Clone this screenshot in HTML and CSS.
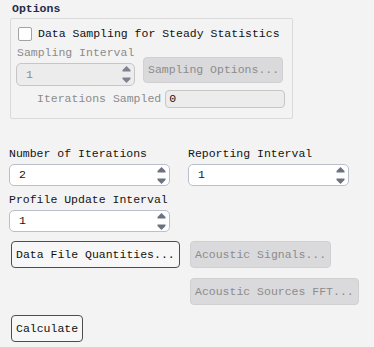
FILE: index.html
```html
<!DOCTYPE html>
<html>
<head>
<meta charset="utf-8">
<link rel="stylesheet" href="styles.css">
</head>
<body>
<div class="panel">
  <div class="title">Options</div>
  <div class="group">
    <label class="check-row">
      <span class="checkbox"></span>
      <span class="check-text">Data Sampling for Steady Statistics</span>
    </label>
    <div class="sampling-row">
      <div class="sampling-col">
        <div class="label disabled-text">Sampling Interval</div>
        <div class="spinner spinner-disabled sampling-spinner">
          <span class="spin-value">1</span>
          <svg class="spin-arrows" width="9" height="17" viewBox="0 0 9 17"><path d="M4.5 0 L8.5 4 L8.5 5.5 L0.5 5.5 L0.5 4 Z M0.5 11.5 L8.5 11.5 L8.5 13 L4.5 17 L0.5 13 Z" fill="#7d8490"/></svg>
        </div>
      </div>
      <button class="btn btn-disabled sampling-btn">Sampling Options...</button>
    </div>
    <div class="iter-row">
      <span class="iter-label disabled-text">Iterations Sampled</span>
      <div class="field field-disabled">0</div>
    </div>
  </div>

  <div class="fields-grid">
    <div class="field-cell">
      <div class="label">Number of Iterations</div>
      <div class="spinner">
        <span class="spin-value">2</span>
        <svg class="spin-arrows" width="9" height="17" viewBox="0 0 9 17"><path d="M4.5 0 L8.5 4 L8.5 5.5 L0.5 5.5 L0.5 4 Z M0.5 11.5 L8.5 11.5 L8.5 13 L4.5 17 L0.5 13 Z" fill="#6b7280"/></svg>
      </div>
    </div>
    <div class="field-cell">
      <div class="label">Reporting Interval</div>
      <div class="spinner">
        <span class="spin-value">1</span>
        <svg class="spin-arrows" width="9" height="17" viewBox="0 0 9 17"><path d="M4.5 0 L8.5 4 L8.5 5.5 L0.5 5.5 L0.5 4 Z M0.5 11.5 L8.5 11.5 L8.5 13 L4.5 17 L0.5 13 Z" fill="#6b7280"/></svg>
      </div>
    </div>
    <div class="field-cell">
      <div class="label">Profile Update Interval</div>
      <div class="spinner">
        <span class="spin-value">1</span>
        <svg class="spin-arrows" width="9" height="17" viewBox="0 0 9 17"><path d="M4.5 0 L8.5 4 L8.5 5.5 L0.5 5.5 L0.5 4 Z M0.5 11.5 L8.5 11.5 L8.5 13 L4.5 17 L0.5 13 Z" fill="#6b7280"/></svg>
      </div>
    </div>
  </div>

  <div class="buttons-grid">
    <div class="btn-cell"><button class="btn">Data File Quantities...</button></div>
    <div class="btn-cell"><button class="btn btn-disabled">Acoustic Signals...</button></div>
    <div class="btn-cell"></div>
    <div class="btn-cell"><button class="btn btn-disabled">Acoustic Sources FFT...</button></div>
    <div class="btn-cell"><button class="btn">Calculate</button></div>
  </div>
</div>
</body>
</html>
```

FILE: styles.css
```css
* { box-sizing: border-box; }

html, body {
  margin: 0;
  padding: 0;
  background: #f3f3f3;
}

body {
  font-family: "Liberation Mono", "DejaVu Sans Mono", monospace;
  font-size: 11.5px;
  line-height: 14px;
  color: #141414;
}

.btn {
  font: inherit;
  height: 27px;
  padding: 0 4px;
  background: #f7f7f7;
  color: #111;
  border: 1px solid #4d4d4d;
  border-radius: 4px;
  white-space: nowrap;
  margin: 0;
}

.btn-disabled {
  background: #dadadc;
  border-color: #d0d0d2;
  color: #8c8c8c;
}

.panel {
  width: 374px;
  height: 347px;
  overflow: hidden;
}

.title {
  font-weight: bold;
  color: #1f2c4a;
  padding: 2px 0 0 12px;
  height: 18px;
}

.group {
  margin-left: 10px;
  width: 283px;
  height: 101px;
  border: 1px solid #dadada;
  border-radius: 2px;
  padding: 8px 0 0 6px;
}

.check-row {
  display: flex;
  align-items: center;
  height: 14px;
  gap: 6px;
  margin-left: 1px;
}

.checkbox {
  width: 14px;
  height: 14px;
  background: #ffffff;
  border: 1px solid #a3a3a3;
  border-radius: 2px;
  flex: none;
}

.check-text { color: #111; }

.disabled-text { color: #8b8b8b; }

.sampling-row {
  display: flex;
  align-items: flex-end;
  margin-top: 5px;
}

.sampling-col {
  display: flex;
  flex-direction: column;
  flex: none;
  width: 118px;
}

.label { height: 14px; white-space: nowrap; }

.sampling-col .label { margin-bottom: 3px; }

.spinner {
  position: relative;
  height: 22px;
  background: #ffffff;
  border: 1px solid #b9c0cb;
  border-radius: 5px;
  display: flex;
  align-items: center;
  padding-left: 9px;
}

.spinner-disabled {
  background: #ececec;
  border-color: #c6c6c6;
}

.sampling-spinner {
  width: 119px;
  height: 23px;
  margin-left: -1px;
  flex: none;
  color: #8b8b8b;
}

.spin-arrows {
  position: absolute;
  right: 3px;
  top: 2px;
}

.sampling-row .sampling-btn {
  flex: none;
  width: 140px;
  height: 26px;
  margin-left: 8px;
  margin-bottom: 3px;
}

.iter-row {
  display: flex;
  align-items: center;
  margin-top: 4px;
  padding-left: 20px;
  gap: 4px;
}

.iter-label { white-space: nowrap; }

.field {
  height: 18px;
  width: 120px;
  flex: none;
  border-radius: 4px;
  padding-left: 3px;
  display: flex;
  align-items: center;
}

.field-disabled {
  background: #ececec;
  border: 1px solid #c6c6c6;
  color: #111;
}

.fields-grid {
  display: grid;
  grid-template-columns: 161px 161px;
  column-gap: 18px;
  row-gap: 7px;
  margin-top: 28px;
  padding-left: 9px;
}

.field-cell .label { margin-bottom: 3px; }

.buttons-grid {
  display: grid;
  grid-template-columns: 179px auto;
  row-gap: 10px;
  margin-top: 9px;
  padding-left: 11px;
  justify-items: start;
}

.btn-cell { height: 27px; }
```
